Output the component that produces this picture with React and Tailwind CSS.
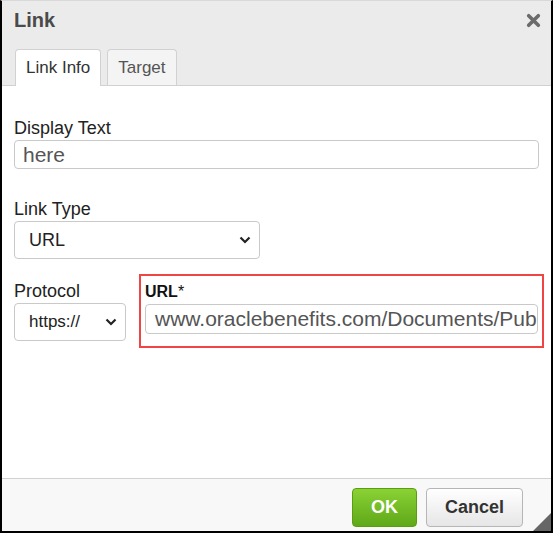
import React from "react";

const Chevron = () => (
  <svg viewBox="0 0 12 8" className="w-[12px] h-[8px]" fill="none" stroke="#222" strokeWidth="2.2">
    <path d="M1.5 1.5 L6 6 L10.5 1.5" />
  </svg>
);

const Select = ({ value, className }) => (
  <div
    className={`flex items-center justify-between h-[38px] border border-[#c9c9c9] rounded-[4px] bg-white pl-[14px] pr-[8px] text-[17px] text-[#222] ${className}`}
  >
    <span>{value}</span>
    <Chevron />
  </div>
);

export default function App() {
  return (
    <div
      className="w-[553px] h-[533px] flex flex-col bg-white border-l-2 border-r-2 border-b-2 border-black border-t border-t-[#d8d8d8] text-[#333]"
      style={{ fontFamily: '"Liberation Sans", Arial, sans-serif' }}
    >
      {/* header */}
      <div className="bg-[#ebebeb] border-b border-[#d1d1d1] h-[85px] flex flex-col">
        <div className="flex items-center justify-between h-[38px] pl-[12px] pr-[10px]">
          <span className="text-[20px] font-bold text-[#4a4a4a]">Link</span>
          <svg viewBox="0 0 14 14" className="w-[15px] h-[15px]" stroke="#6b6b6b" strokeWidth="3.4" strokeLinecap="round">
            <path d="M2.5 2.5 L11.5 11.5 M11.5 2.5 L2.5 11.5" />
          </svg>
        </div>
        <div className="flex items-end gap-[6px] pl-[13px] mt-auto">
          <div className="h-[37px] px-[10px] flex items-center bg-white border border-b-0 border-[#d1d1d1] rounded-t-[4px] text-[17px] text-[#333] -mb-px">
            Link Info
          </div>
          <div className="h-[36px] px-[10px] flex items-center bg-[#f4f4f4] border border-b-0 border-[#d1d1d1] rounded-t-[4px] text-[17px] text-[#555]">
            Target
          </div>
        </div>
      </div>

      {/* body */}
      <div className="flex-1 flex flex-col pl-[12px] pr-[12px]">
        <label className="mt-[32px] text-[18px] leading-[20px] text-[#222]">Display Text</label>
        <div className="mt-[2px] h-[29px] border border-[#c9c9c9] rounded-[4px] flex items-center px-[8px] text-[21px] text-[#555]">
          here
        </div>

        <label className="mt-[30px] text-[18px] leading-[20px] text-[#222]">Link Type</label>
        <Select value="URL" className="mt-[2px] w-[246px] text-[18px]" />

        <div className="flex mt-[15px]">
          <div className="flex flex-col pt-[7px] shrink-0">
            <label className="text-[18px] leading-[20px] text-[#222]">Protocol</label>
            <Select value="https://" className="mt-[2px] w-[112px]" />
          </div>
          <div className="ml-[13px] flex-1 min-w-0 border-2 border-[#f04545] pl-[4px] pr-[4px] pt-[6px] h-[74px] -mr-[5px]">
            <div className="text-[16px] leading-[19px] text-[#111]">
              <span className="font-bold">URL</span>*
            </div>
            <div className="mt-[3px] h-[30px] border border-[#c9c9c9] rounded-[4px] flex items-center pl-[9px] text-[21px] text-[#555] overflow-hidden whitespace-nowrap">
              www.oraclebenefits.com/Documents/Pub
            </div>
          </div>
        </div>
      </div>

      {/* footer */}
      <div className="relative h-[53px] bg-[#f8f8f8] border-t border-[#d1d1d1] flex items-start justify-end gap-[9px] pr-[28px] pt-[9px]">
        <button className="w-[65px] h-[39px] rounded-[4px] border border-[#5a9e0f] bg-gradient-to-b from-[#8ad234] to-[#5fa818] text-white font-bold text-[18px]">
          OK
        </button>
        <button className="w-[97px] h-[39px] rounded-[4px] border border-[#b6b6b6] bg-gradient-to-b from-[#ffffff] to-[#e6e6e6] text-[#333] font-bold text-[18px]">
          Cancel
        </button>
        <svg viewBox="0 0 18 18" className="absolute right-0 bottom-0 w-[18px] h-[18px]">
          <path d="M18 0 L18 18 L0 18 Z" fill="#666" />
        </svg>
      </div>
    </div>
  );
}
